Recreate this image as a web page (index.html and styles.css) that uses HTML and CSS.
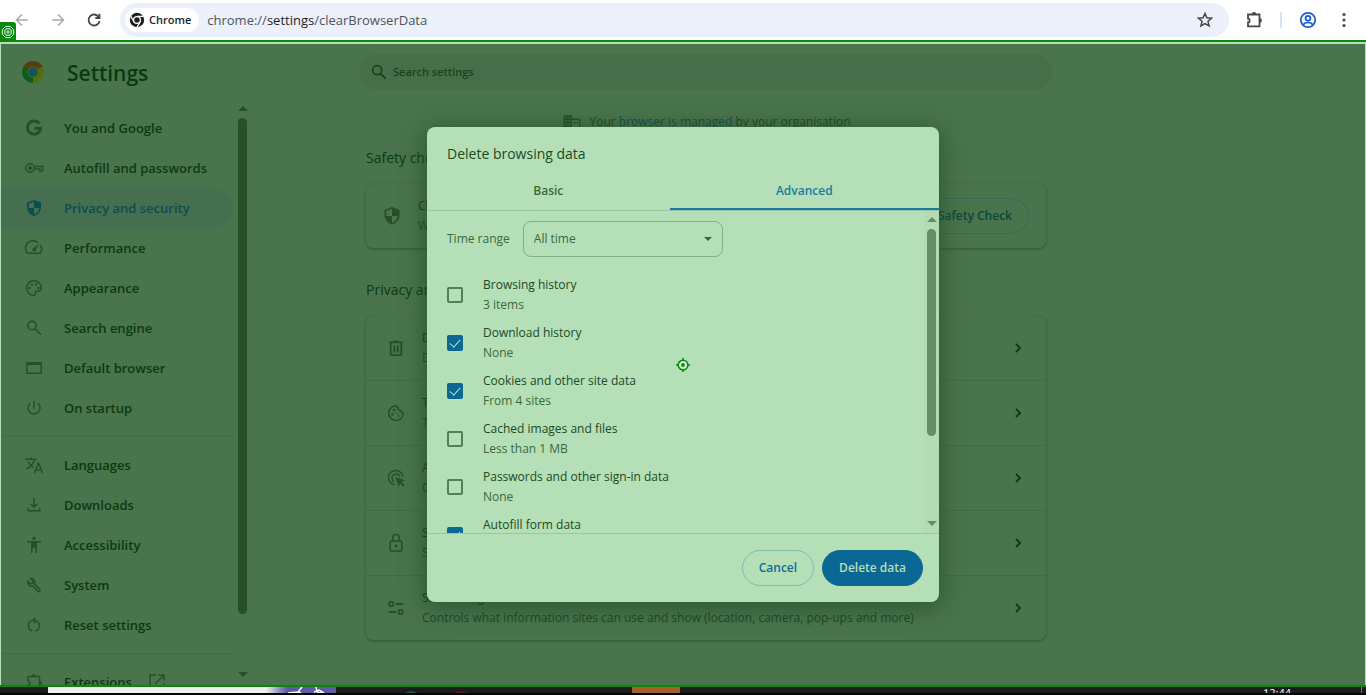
FILE: index.html
```html
<!DOCTYPE html>
<html lang="en-GB">
<head>
<meta charset="utf-8">
<title>Settings – Delete browsing data</title>
<link rel="stylesheet" href="styles.css">
</head>
<body>
<div class="screen">
  <header class="toolbar">
    <div class="nav-buttons">
      <button class="tool muted" aria-label="Back"><svg width="16" height="16" viewBox="0 0 16 16"><path d="M14 8H3M8 2.500 2.500 8 8 13.500" class="line"/></svg></button>
      <button class="tool muted" aria-label="Forward"><svg width="16" height="16" viewBox="0 0 16 16"><path d="M2 8h11M8 2.500 13.500 8 8 13.500" class="line"/></svg></button>
      <button class="tool" aria-label="Reload"><svg width="16" height="16" viewBox="0 0 16 16"><path d="M12.800 5.200A5.500 5.500 0 1 0 13.500 8.800M13.500 1.800v4.200H9.300" class="line thick"/></svg></button>
    </div>
    <div class="omnibox">
      <button class="chip"><svg width="16" height="16" viewBox="0 0 16 16"><circle cx="8" cy="8" r="7.200" fill="#1f1f1f"/><circle cx="8" cy="8" r="3.400" fill="#1f1f1f" stroke="#fff" stroke-width="1.300"/><path d="M8 4.400h6.300M4.900 9.800 1.800 4.300M11.100 9.800l-3.200 5.500" stroke="#fff" stroke-width="1.300"/></svg>Chrome</button>
      <div class="url">chrome://<span class="host">settings</span>/clearBrowserData</div>
      <button class="tool" aria-label="Bookmark this tab"><svg width="16" height="16" viewBox="0 0 16 16"><path d="m8 1.500 1.900 4.300 4.700.4-3.600 3.100 1.100 4.600L8 11.500l-4.100 2.400L5 9.300 1.400 6.200l4.700-.4z" class="line"/></svg></button>
    </div>
    <button class="tool ext" aria-label="Extensions"><svg width="18" height="18" viewBox="0 0 18 18"><path d="M2 3.500h11.500v11.800H2v-3.800c2.200 0 2.200-4 0-4zM6.500 3.500a1.500 1.500 0 0 1 3 0M13.500 8a1.500 1.500 0 0 1 0 3" class="line thick"/></svg></button>
    <span class="tool-sep"></span>
    <button class="tool profile" aria-label="Profile"><svg width="18" height="18" viewBox="0 0 18 18"><g class="line thick"><circle cx="9" cy="9" r="7.200"/><circle cx="9" cy="7.200" r="2.400"/><path d="M3.800 14c2.800-3.400 7.600-3.400 10.400 0"/></g></svg></button>
    <button class="tool" aria-label="Menu"><svg width="16" height="16" viewBox="0 0 16 16"><g fill="#474747"><circle cx="8" cy="2.500" r="1.600"/><circle cx="8" cy="8" r="1.600"/><circle cx="8" cy="13.500" r="1.600"/></g></svg></button>
  </header>

  <div class="page">
    <div class="page-header">
      <svg class="logo" width="24" height="24" viewBox="0 0 24 24"><path d="M12 12 2.500 6.500A11 11 0 0 1 21.500 6.500z" fill="#573e10"/><path d="M12 12 21.500 6.500A11 11 0 0 1 12 23z" fill="#5a6c0b"/><path d="M12 12v11A11 11 0 0 1 2.500 6.500z" fill="#0e5c18"/><path d="M12 6.500h9.500" stroke="#573e10"/><path d="M16.800 14.800 12 23V17z" fill="#5a6c0b"/><path d="M7.200 14.800 2.500 6.500 7 9z" fill="#0e5c18"/><circle cx="12" cy="12" r="5.500" fill="#356b3c"/><circle cx="12" cy="12" r="4.500" fill="#155454"/></svg>
      <h1>Settings</h1>
      <label class="search"><svg width="18" height="18" viewBox="0 0 20 20"><circle cx="8" cy="8" r="5" class="line heavy"/><path d="m11.500 11.500 6 6" class="line heavy"/></svg><input type="search" placeholder="Search settings" aria-label="Search settings"></label>
    </div>

    <div class="columns">
      <div class="sidebar">
        <nav class="menu">
          <a class="item" href="#"><svg viewBox="0 0 20 20"><path d="M15.300 5.600A6.600 6.600 0 1 0 16.600 10.300H10.300" class="line g"/></svg>You and Google</a>
          <a class="item" href="#"><svg viewBox="0 0 20 20"><g class="line"><circle cx="6" cy="10" r="4.200"/><path d="M10.500 8.500h8v4.500h-2.700v-2h-5.300"/></g><circle cx="6" cy="10" r="2" fill="currentColor"/></svg>Autofill and passwords</a>
          <a class="item selected" href="#" aria-current="page"><svg viewBox="0 0 20 20"><path d="M10 2 3 4.600v4.700c0 4.200 3 7.800 7 8.700 4-.9 7-4.500 7-8.700V4.600zm0 1.700V10h5.400c-.4 3-2.600 5.700-5.400 6.500V10H4.600V5.700z" fill="currentColor" fill-rule="evenodd"/></svg>Privacy and security</a>
          <a class="item" href="#"><svg viewBox="0 0 20 20"><path d="M14 4.800A7.200 7.200 0 0 0 3.700 15.200h12.600A7.200 7.200 0 0 0 16.200 7" class="line"/><path d="m15 5.700-3.500 7a1.700 1.700 0 0 1-3-1.700z" fill="currentColor"/></svg>Performance</a>
          <a class="item" href="#"><svg viewBox="0 0 20 20"><path d="M10 2.700a7.300 7.300 0 0 0 0 14.600c1.200 0 1.700-.7 1.500-1.600-.7-1.800 0-2.700 1.500-2.700h1.500c1.700 0 2.800-1.200 2.800-3C17.300 5.800 14 2.700 10 2.700z" class="line"/><g fill="currentColor"><circle cx="5.700" cy="10" r="1.200"/><circle cx="8" cy="6.500" r="1.200"/><circle cx="12" cy="6.500" r="1.200"/><circle cx="14.300" cy="10" r="1.200"/></g></svg>Appearance</a>
          <a class="item" href="#"><svg viewBox="0 0 20 20"><circle cx="8" cy="7.500" r="4.300" class="line"/><path d="m11 10.700 6 6" class="line"/></svg>Search engine</a>
          <a class="item" href="#"><svg viewBox="0 0 20 20"><rect x="2.700" y="4.700" width="14.600" height="10.600" rx=".8" class="line"/><path d="M2.500 4.500h15v2.500h-15z" fill="currentColor"/></svg>Default browser</a>
          <a class="item" href="#"><svg viewBox="0 0 20 20"><path d="M10 3v7.500M6.200 5.300a6 6 0 1 0 7.600 0" class="line"/></svg>On startup</a>
          <hr>
          <a class="item" href="#"><svg viewBox="0 0 20 20"><path d="M1.200 4.200h11.600M7 2v2.200M10.500 4.500C9.500 8.500 6 12 2.500 14M4 6.500c1.500 3 3.500 5 5.500 6M10.500 18l3.700-9.700h.4L18.500 18M11.800 14.800h5.400" class="line"/></svg>Languages</a>
          <a class="item" href="#"><svg viewBox="0 0 20 20"><path d="M10 3v9M6.500 8.800 10 12.300l3.500-3.500M4.200 13v2.700h11.600V13" class="line"/></svg>Downloads</a>
          <a class="item" href="#"><svg viewBox="0 0 20 20"><circle cx="10" cy="3.500" r="1.700" fill="currentColor"/><path d="M3 6h14v1.600h-4V18h-1.600v-5H8.600v5H7V7.600H3z" fill="currentColor"/></svg>Accessibility</a>
          <a class="item" href="#"><svg viewBox="0 0 20 20"><path d="M6.500 3.400 9.200 6 8.800 8.200 6.400 8.800 3.700 6.200C3 9 5.500 11.800 8.800 11l5 5.300c1.300 1 3-.6 2-2l-5.100-4.900C11.500 5.800 9.500 3 6.500 3.400z" class="line"/></svg>System</a>
          <a class="item" href="#"><svg viewBox="0 0 20 20"><path d="M7.500 5.700a5.500 5.500 0 0 0 1 10.200M11.500 16A5.500 5.500 0 0 0 10 5.200M11.500 2.700 8.700 5.300l2.800 2.700" class="line"/></svg>Reset settings</a>
          <hr>
          <a class="item" href="#"><svg viewBox="0 0 20 20"><path d="M4 4.500h11.500v13H4v-4.500c2.500 0 2.500-4 0-4zM8 4.500a1.600 1.600 0 0 1 3.200 0M15.500 9.500a1.600 1.600 0 0 1 0 3.200" class="line"/></svg>Extensions<svg class="launch" viewBox="0 0 20 20"><path d="M9 3H3v14h14v-6M11.500 3H17v5.500M17 3 8 12" class="line"/></svg></a>
        </nav>
        <div class="scrollbar"><i class="up"></i><i class="thumb"></i><i class="down"></i></div>
      </div>

      <main class="content">
        <p class="managed"><svg width="20" height="20" viewBox="0 0 20 20"><path d="M1.500 3h8.500v3.500h8.500V18h-17zM3.200 4.700v1.400h1.600V4.700zm3.400 0v1.400h1.600V4.700zM3.200 8v1.500h1.600V8zm3.400 0v1.500h1.600V8zM3.200 11.400v1.500h1.600v-1.500zm3.400 0v1.500h1.600v-1.500zM10 8v8.500h7V8zm1.800 1.800h1.700v1.700h-1.700zm3 0H16v1.700h-1.200z" fill="currentColor" fill-rule="evenodd"/></svg><span>Your <a href="#">browser is managed</a> by your organisation</span></p>
        <h2>Safety check</h2>
        <section class="card">
          <div class="row safety">
            <svg viewBox="0 0 20 20"><path d="M10 1 2.500 4v5c0 4.500 3.200 8.500 7.500 9.700 4.300-1.200 7.500-5.200 7.500-9.700V4zm0 1.800V10h5.700c-.4 3.200-2.700 6-5.700 6.900V10H4.300V5z" fill="currentColor" fill-rule="evenodd"/></svg>
            <div class="row-text"><div>Chrome found some safety recommendations</div><div>Weak passwords, extensions</div></div>
            <button class="outline dim">Go to Safety Check</button>
          </div>
        </section>
        <h2>Privacy and security</h2>
        <section class="card">
          <a class="row" href="#"><svg viewBox="0 0 20 20"><path d="M4.700 5v12.200h10.600V5M3 4.300h14M7.500 3.500h5M8.300 7.500v7M11.700 7.500v7" class="line thick"/></svg><div class="row-text"><div>Delete browsing data</div><div>Delete history, cookies, cache and more</div></div><svg class="chev" viewBox="0 0 20 20"><path d="m8 6 4 4-4 4" class="line thick"/></svg></a>
          <a class="row" href="#"><svg viewBox="0 0 20 20"><path d="M10.500 2.800A7.300 7.300 0 1 0 17.300 10c-1.800 0-2.600-1-2.500-2.500-1.800.2-3-1-2.600-2.600-1 0-1.700-.8-1.700-2.100z" class="line"/><g fill="currentColor"><circle cx="8" cy="7" r="1.300"/><circle cx="6.500" cy="11.500" r="1.300"/><circle cx="12.500" cy="13" r="1"/><circle cx="10.500" cy="10" r=".8"/></g></svg><div class="row-text"><div>Third-party cookies</div><div>Third-party cookies are blocked in Incognito mode</div></div><svg class="chev" viewBox="0 0 20 20"><path d="m8 6 4 4-4 4" class="line thick"/></svg></a>
          <a class="row" href="#"><svg viewBox="0 0 20 20"><path d="M9 17A7.300 7.300 0 1 1 17 9M8 13.800A4.200 4.200 0 1 1 13.800 8" class="line"/><path d="m9.500 9 9.500 3.300-3.600 1.700 3.300 3.300-1.400 1.400-3.300-3.300-1.500 3.400z" fill="currentColor"/></svg><div class="row-text"><div>Ads privacy</div><div>Customise the info used by sites to show you ads</div></div><svg class="chev" viewBox="0 0 20 20"><path d="m8 6 4 4-4 4" class="line thick"/></svg></a>
          <a class="row" href="#"><svg viewBox="0 0 20 20"><rect x="4.200" y="8" width="11.600" height="10" rx="1" class="line"/><path d="M6.800 8V4.800a3.200 3.200 0 0 1 6.400 0V8" class="line"/><circle cx="10" cy="13" r="1.500" fill="currentColor"/></svg><div class="row-text"><div>Security</div><div>Safe Browsing (protection from dangerous sites) and other security settings</div></div><svg class="chev" viewBox="0 0 20 20"><path d="m8 6 4 4-4 4" class="line thick"/></svg></a>
          <a class="row" href="#"><svg viewBox="0 0 20 20"><g class="line thick"><circle cx="5.300" cy="6" r="2.200"/><path d="M10 6h7M3 14h7"/><circle cx="14.700" cy="14" r="2.200"/></g></svg><div class="row-text"><div>Site settings</div><div>Controls what information sites can use and show (location, camera, pop-ups and more)</div></div><svg class="chev" viewBox="0 0 20 20"><path d="m8 6 4 4-4 4" class="line thick"/></svg></a>
        </section>
      </main>
    </div>

    <div class="overlay">
      <div class="dialog" role="dialog" aria-labelledby="dialog-title">
        <h3 id="dialog-title">Delete browsing data</h3>
        <div class="tabs" role="tablist"><button role="tab">Basic</button><button role="tab" class="active" aria-selected="true">Advanced</button></div>
        <div class="dialog-body">
          <div class="options">
            <div class="range"><label for="range">Time range</label><span class="select-wrap"><select id="range"><option>All time</option></select></span></div>
            <label class="option"><input type="checkbox"><span>Browsing history<small>3 items</small></span></label>
            <label class="option"><input type="checkbox" checked><span>Download history<small>None</small></span></label>
            <label class="option"><input type="checkbox" checked><span>Cookies and other site data<small>From 4 sites</small></span></label>
            <label class="option"><input type="checkbox"><span>Cached images and files<small>Less than 1 MB</small></span></label>
            <label class="option"><input type="checkbox"><span>Passwords and other sign-in data<small>None</small></span></label>
            <label class="option"><input type="checkbox" checked><span>Autofill form data</span></label>
          </div>
          <div class="scrollbar"><i class="up"></i><i class="thumb"></i><i class="down"></i></div>
        </div>
        <div class="actions"><button class="outline">Cancel</button><button class="filled">Delete data</button></div>
      </div>
      <svg class="target" width="14" height="14" viewBox="0 0 14 14"><circle cx="7" cy="7" r="4.800" fill="#d9f0da" stroke="#078a0c" stroke-width="1.600"/><path d="M7 0v3M7 11v3M0 7h3M11 7h3" stroke="#078a0c" stroke-width="1.600"/><circle cx="7" cy="7" r="1.900" fill="#078a0c"/></svg>
    </div>
    <span class="badge"><svg width="14" height="14" viewBox="0 0 14 14"><g fill="none" stroke="#e4f5e4"><circle cx="7" cy="7" r="5.800"/><circle cx="7" cy="7" r="3.500"/><circle cx="7" cy="7" r="1.200"/></g></svg></span>
  </div>

  <footer class="taskbar">
    <span class="task-search"></span>
    <span class="task-art"><svg width="70" height="8" viewBox="0 0 70 8"><path d="M22 6l10-1 4-5M30 8l3-3 5 3M50 0l1 5 8 2M48 5l5-2 5 3" fill="none" stroke="#fff" stroke-width="1.500"/></svg></span>
    <span class="task-apps"><i class="dot teal"></i><i class="dot red"></i></span>
    <span class="task-active"></span>
    <time>12:44</time>
    <span class="task-edge"></span>
  </footer>
</div>
</body>
</html>
```

FILE: styles.css
```css
* { box-sizing: border-box; }
body { margin: 0; font-family: "Open Sans", "Noto Sans", sans-serif; font-size: 12px; line-height: 20px; color: #0c3a10; background: #fff; }
button, input, select { font: inherit; color: inherit; }
button { border: 0; padding: 0; background: none; }
a { color: inherit; text-decoration: none; }
h1, h2, h3, p { margin: 0; font-weight: 400; }
svg { display: block; flex: none; }
.line { fill: none; stroke: currentColor; stroke-width: 1.5; }
.thick { stroke-width: 1.8; }
.heavy { stroke-width: 2; }
.g { stroke-width: 3; }

.screen { display: flex; flex-direction: column; height: 100vh; overflow: hidden; }

.toolbar { display: flex; align-items: center; height: 40px; flex: none; padding: 0 14px; color: #474747; }
.nav-buttons { display: flex; gap: 20px; margin-right: 18px; }
.tool { display: grid; place-items: center; flex: none; }
.muted { color: #ababab; }
.omnibox { display: flex; align-items: center; flex: 1; height: 34px; padding: 0 16px 0 5px; border-radius: 17px; background: #ebf0fa; }
.chip { display: flex; align-items: center; gap: 4px; height: 24px; padding: 0 8px 0 4px; border-radius: 12px; background: #fff; color: #1f1f1f; font-size: 11px; font-weight: 600; }
.url { flex: 1; margin-left: 8px; font-size: 13px; color: #50545a; }
.host { color: #1f1f1f; }
.ext { margin-left: 17px; }
.tool-sep { width: 2px; height: 16px; margin: 0 17px 0 16px; background: #d3e3fd; }
.profile { color: #1a5fd0; margin-right: 19px; }

.page { position: relative; display: flex; flex-direction: column; flex: 1; min-height: 0; margin-top: 2px; border: 1px solid #b5dfb7; border-width: 2px 1px 0; background: #4a744c; outline: 2px solid #078a0c; }
.page-header { display: flex; align-items: center; height: 56px; flex: none; padding-left: 20px; }
.page-header h1 { width: 271px; margin-left: 22px; padding-top: 2px; font-size: 21px; font-weight: 600; line-height: 28px; }
.logo { flex: none; }
.search { display: flex; align-items: center; gap: 5px; width: 692px; height: 36px; margin-left: 22px; padding: 0 10px; border-radius: 18px; background: #466f49; color: #17451a; }
.search input { flex: 1; min-width: 0; padding: 0; border: 0; outline: 0; background: none; font-size: 11px; font-weight: 600; }
.search input::placeholder { color: #17451a; opacity: 1; }

.columns { display: flex; flex: 1; min-height: 0; }
.sidebar { display: flex; width: 249px; flex: none; }
.menu { flex: 1; min-width: 0; padding-top: 8px; padding-right: 2px; overflow: hidden; }
.item { display: flex; align-items: center; gap: 20px; height: 40px; padding-left: 23px; border-radius: 0 20px 20px 0; font-size: 13px; font-weight: 600; }
.item svg { width: 20px; height: 20px; color: #27502a; }
.item .launch { margin-left: -5px; }
.selected, .item.selected svg { color: #0c4d52; }
.selected { background: #456f4e; }
.menu hr { height: 1px; margin: 8px 0; border: 0; background: #426c45; }
.scrollbar { display: flex; flex-direction: column; align-items: center; flex: none; width: 15px; color: #27502a; }
.up, .down { border: 5px solid transparent; border-top-width: 0; border-bottom-color: currentColor; }
.down { border-width: 5px 5px 0; border-top-color: currentColor; }
.thumb { width: 9px; border-radius: 5px; background: currentColor; }
.sidebar .scrollbar { padding: 6px 0 8px; }
.sidebar .thumb { flex: 0 1 496px; margin: 7px 0 auto; }

.content { box-sizing: content-box; flex: 1; min-width: 0; max-width: 680px; padding: 0 8px 0 116px; overflow: hidden; }
.managed { display: flex; justify-content: center; align-items: center; gap: 8px; padding-top: 12px; color: #1a471d; }
.managed svg { color: #27502a; }
.managed a { color: #0c4d52; }
.content h2 { padding-top: 16px; padding-bottom: 16px; font-size: 14px; }
.content .card + h2 { padding-top: 32px; }
.card { border-radius: 8px; background: #4a744c; box-shadow: 0 1px 3px #3b643d, 0 1px 2px #315a34; }
.row { display: flex; align-items: center; height: 64px; padding: 0 18px 0 20px; }
.row + .row { height: 65px; border-top: 1px solid #416b44; }
.row > svg { width: 20px; height: 20px; color: #27502a; }
.row > .chev { color: #0c3a10; }
.row-text { flex: 1; min-width: 0; margin-left: 16px; white-space: nowrap; overflow: hidden; }
.row-text > :last-child { color: #1a471d; }
.safety { padding: 0 17px 0 16px; }
.outline, .filled { height: 36px; padding: 0 16px; border: 1px solid #7fbab2; border-radius: 18px; color: #126b95; font-weight: 600; }
.dim { border-color: #356b58; color: #0c4640; }

.overlay { position: absolute; inset: 0; display: grid; place-items: center; }
.dialog, .target { grid-area: 1 / 1; }
.target { position: relative; }
.dialog { display: flex; flex-direction: column; width: 512px; border-radius: 8px; background: #b5dfb7; box-shadow: 0 4px 24px 2px #264f2acc; overflow: hidden; }
.dialog h3 { padding: 16px 20px 7px; font-size: 14px; line-height: 22px; color: #1c4a1f; }
.tabs { display: flex; border-bottom: 1px solid #9dc6a0; }
.tabs button { flex: 1 1 auto; height: 38px; padding-top: 2px; border-bottom: 2px solid transparent; font-weight: 600; color: #396a3c; }
.tabs .active { color: #197da4; border-color: #147aa6; }
.dialog-body { display: flex; height: 322px; color: #1c4a1f; }
.options { flex: 1; padding: 10px 20px 0; overflow: hidden; }
.range { display: flex; align-items: center; gap: 13px; height: 36px; margin-bottom: 14px; color: #396a3c; }
.select-wrap { position: relative; display: flex; }
.select-wrap::after { content: ""; position: absolute; right: 11px; top: 16px; border: 4px solid transparent; border-width: 4px 4px 0; border-top-color: #396a3c; pointer-events: none; }
.range select { appearance: none; width: 200px; height: 36px; padding: 0 10px; border: 1px solid #85b189; border-radius: 8px; background: none; color: #396a3c; }
.option { display: flex; align-items: center; gap: 20px; height: 48px; }
.option small { display: block; height: 20px; font-size: 12px; color: #396a3c; }
.option:last-child { align-items: flex-start; padding-top: 4px; }
.option:last-child input { margin-top: 12px; }
.option input { appearance: none; display: grid; place-items: center; width: 16px; height: 16px; margin: 0; flex: none; border: 2px solid #4f8153; border-radius: 2px; }
.option input:checked { border-color: #0b6794; background: #0b6794; }
.option input:checked::after { content: ""; width: 5px; height: 9px; border: solid #b5dfb7; border-width: 0 1px 1px 0; transform: translateY(-1px) rotate(42deg); }
.dialog-body .scrollbar { background: #b3dcb5; color: #648f66; padding: 6px 0 7px; }
.dialog-body .thumb { height: 207px; margin: 7px 0 auto; }
.actions { display: flex; justify-content: flex-end; gap: 8px; padding: 16px; border-top: 1px solid #9dc6a0; }
.filled { border-color: #0b6794; background: #0b6794; color: #b5dfb7; }

.badge { position: absolute; left: -1px; top: -22px; display: grid; place-items: center; width: 16px; height: 20px; border-radius: 0 3px 0 0; background: #078a0c; }

.taskbar { position: relative; z-index: 1; display: flex; flex: none; height: 8px; margin-top: 2px; overflow: hidden; background: #1c1c1c; border-bottom: 2px solid #050505; }
.task-search { width: 218px; margin-left: 48px; background: #f0f0f0; }
.task-art { width: 70px; background: linear-gradient(90deg, #f0f0f0, #5c5ba5 30%, #5c5ba5); }
.task-apps { display: flex; gap: 30px; width: 296px; padding: 4px 0 0 65px; }
.dot { width: 20px; height: 20px; border-radius: 10px; }
.teal { background: #14555c; }
.red { background: #5e1712; }
.task-active { width: 48px; background: #a85e27; }
.task-apps, .task-active { flex: none; }
.taskbar time { margin-left: auto; margin-right: 70px; font-size: 11px; line-height: 12px; color: #fff; }
.task-edge { width: 1px; margin-right: 4px; background: #777; }
```
